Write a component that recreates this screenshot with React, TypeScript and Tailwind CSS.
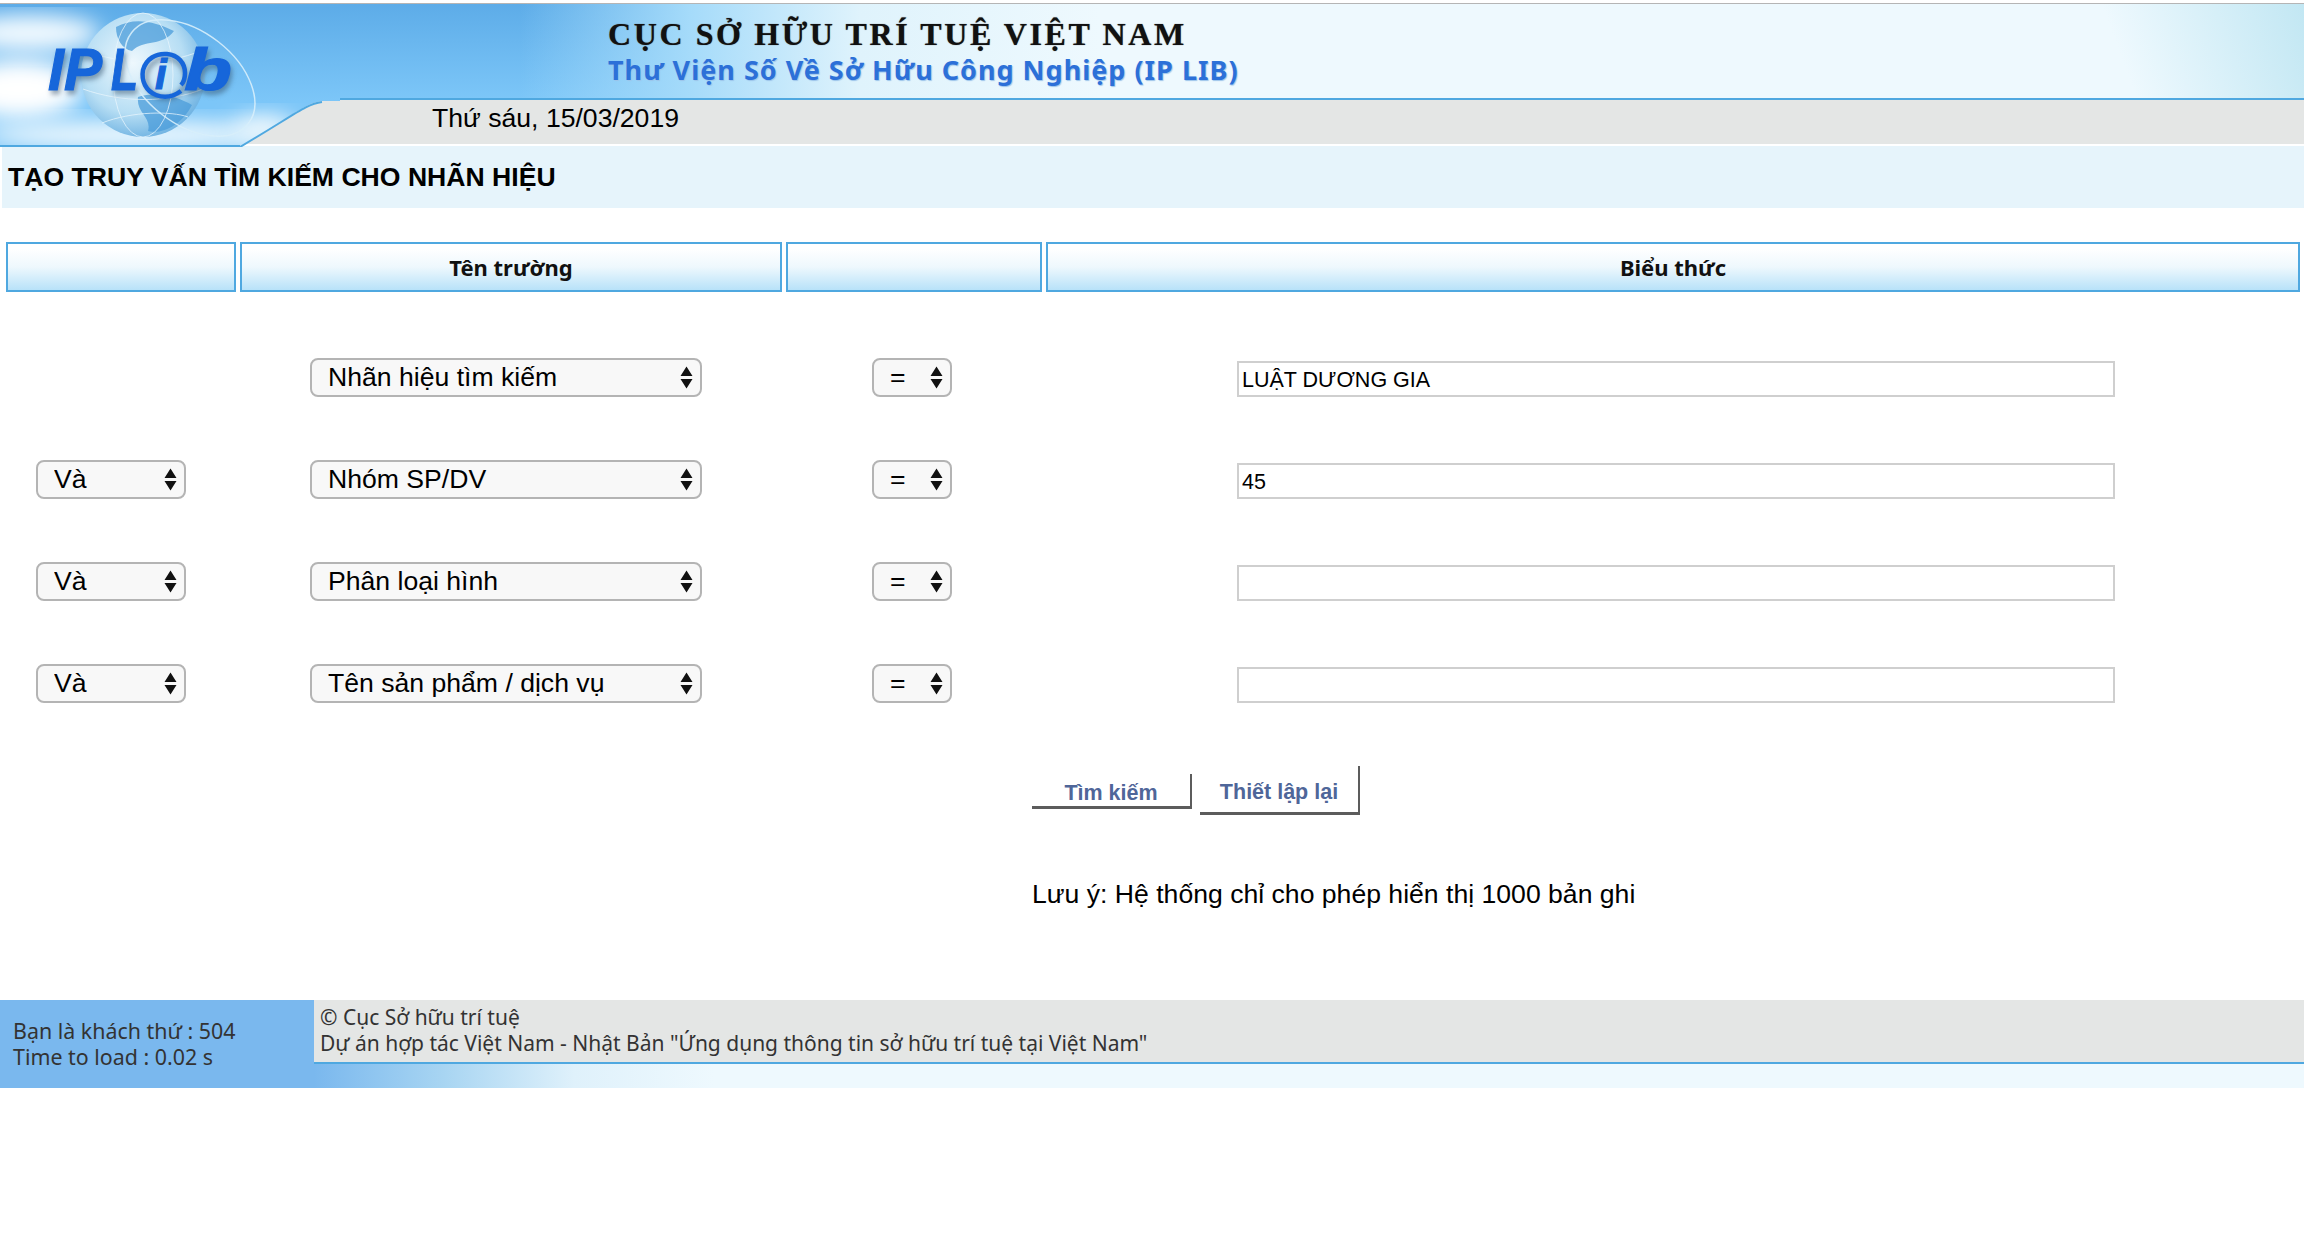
const ROWS = [
  { join: '', field: 'Nhãn hiệu tìm kiếm', value: 'LUẬT DƯƠNG GIA' },
  { join: 'Và', field: 'Nhóm SP/DV', value: '45' },
  { join: 'Và', field: 'Phân loại hình', value: '' },
  { join: 'Và', field: 'Tên sản phẩm / dịch vụ', value: '' },
];

const COLUMNS = 'grid grid-cols-[230px_542px_256px_1254px] gap-x-[4px] pl-[6px]';

function LogoText() {
  return (
    <>
      <text x="48" y="83" textLength="54" lengthAdjust="spacingAndGlyphs">IP</text>
      <text x="111" y="83" textLength="27" lengthAdjust="spacingAndGlyphs">L</text>
      <text x="184" y="83" textLength="48" lengthAdjust="spacingAndGlyphs">b</text>
    </>
  );
}

function Logo() {
  return (
    <svg className="absolute left-0 top-[4px]" width="340" height="140" viewBox="0 0 340 140">
      <defs>
        <linearGradient id="sky" gradientUnits="userSpaceOnUse" x1="0" y1="0" x2="0" y2="94">
          <stop offset="0" stopColor="#5dace8" />
          <stop offset="1" stopColor="#7cc6f8" />
        </linearGradient>
        <radialGradient id="globe" cx="0.42" cy="0.4" r="0.68">
          <stop offset="0" stopColor="#eef8fd" />
          <stop offset="0.6" stopColor="#b7def4" />
          <stop offset="1" stopColor="#5fa9de" />
        </radialGradient>
        <filter id="soft" x="-30%" y="-40%" width="160%" height="180%">
          <feGaussianBlur stdDeviation="11" />
        </filter>
        <filter id="shade" x="-10%" y="-10%" width="120%" height="130%">
          <feGaussianBlur stdDeviation="2.5" />
        </filter>
        <filter id="thin" x="-10%" y="-10%" width="120%" height="120%">
          <feGaussianBlur stdDeviation="0.7" />
        </filter>
        <clipPath id="skyClip">
          <path d="M0 0H340V94H322C306 96 296 106 240 140H0Z" />
        </clipPath>
      </defs>
      <g clipPath="url(#skyClip)">
        <rect width="340" height="140" fill="url(#sky)" />
        <ellipse cx="30" cy="26" rx="70" ry="18" fill="#f4fbff" filter="url(#soft)" />
        <ellipse cx="20" cy="82" rx="62" ry="30" fill="#fff" filter="url(#soft)" />
        <ellipse cx="130" cy="128" rx="150" ry="14" fill="#f2fafe" filter="url(#soft)" />
        <ellipse cx="265" cy="122" rx="32" ry="14" fill="#eef8fd" filter="url(#soft)" />
        <circle cx="143" cy="68" r="62" fill="url(#globe)" />
        <path d="M116 20C134 10 154 14 174 24C162 40 144 32 132 44C122 42 116 32 116 20ZM138 90C158 84 178 90 192 98C182 118 162 128 148 124C152 110 136 106 138 90Z" fill="#4b9ddb" opacity="0.75" filter="url(#thin)" />
        <g fill="none" stroke="#eaf6fd" strokeWidth="1" opacity="0.75">
          <ellipse cx="143" cy="68" rx="30" ry="62" />
          <path d="M86 44C122 58 168 58 200 44M83 82C122 96 168 96 203 82M102 116C132 104 172 104 188 110" />
        </g>
        <ellipse cx="190" cy="71" rx="74" ry="46" transform="rotate(38 190 71)" fill="none" stroke="#d7eefb" strokeWidth="1.5" opacity="0.9" />
        <path d="M0 139H240" stroke="#4fa8e0" strokeWidth="2" />
      </g>
      <path d="M322 95C306 97 296 107 240 140" fill="none" stroke="#4fa8e0" strokeWidth="2" />
      <g fontFamily="Liberation Sans, sans-serif" fontWeight="700" fontStyle="italic" fontSize="60">
        <g filter="url(#shade)" fill="#33506b" stroke="#33506b" opacity="0.5" transform="translate(2 4)">
          <LogoText />
          <circle cx="164" cy="67" r="20" fill="none" strokeWidth="5" />
        </g>
        <g fill="#1666da" stroke="#1666da" strokeWidth="1.2">
          <LogoText />
          <path d="M181 84C173 90 164 91 156 88C146 84 141 74 143 63C146 52 156 46 167 47C178 48 185 56 185 66C185 72 183 76 181 78" fill="none" strokeWidth="4.5" />
          <text x="155" y="82" fontSize="42">i</text>
        </g>
      </g>
    </svg>
  );
}

function Arrows() {
  return (
    <svg className="pointer-events-none absolute right-[9px] top-[8px]" width="13" height="23" viewBox="0 0 13 23">
      <path d="M6.500 0.500L12.500 10H0.500Z M6.500 22.500L0.500 13H12.500Z" fill="#111" />
    </svg>
  );
}

function FakeSelect({ value, className }: { value: string; className: string }) {
  return (
    <div className={`relative h-[39px] ${className}`}>
      <select
        defaultValue={value}
        className="h-full w-full appearance-none rounded-[8px] border-2 border-[#b4b4b4] bg-[#f8f8f8] pb-[1px] pl-[16px] text-[26.600px] leading-[32px] text-black outline-none"
      >
        <option>{value}</option>
      </select>
      <Arrows />
    </div>
  );
}

export default function App() {
  return (
    <div className="min-h-[1234px] bg-white pt-[3px] font-['Liberation_Sans',sans-serif] text-black">
      <div className="relative">
        <div className="border-t border-[#b5b5b5]" />
        <div className="flex h-[94px] bg-[linear-gradient(250deg,#c2e7f3_0px,#eef9fe_190px,transparent_190px),linear-gradient(90deg,transparent_520px,#a5dbfa_690px,#dff3fc_860px,#eef9fe_1100px),linear-gradient(180deg,#5dace8,#7cc6f8)] pl-[608px] pt-[13px]">
          <div>
            <p className="font-['Liberation_Serif',serif] text-[32px] font-bold leading-[35px] tracking-[2.600px] text-[#111] [text-shadow:0_0_1px_#555]">
              CỤC SỞ HỮU TRÍ TUỆ VIỆT NAM
            </p>
            <p className="font-['Noto_Sans',sans-serif] text-[27px] font-bold leading-[35px] tracking-[1px] text-[#2c70d8] [text-shadow:1px_1px_1px_#9cc4ea]">
              Thư Viện Số Về Sở Hữu Công Nghiệp (IP LIB)
            </p>
          </div>
        </div>
        <div className="h-[2px] bg-[#4fa8e0]" />
        <div className="h-[44px] bg-[#e4e6e5] pl-[432px] text-[26.600px] leading-[37px]">Thứ sáu, 15/03/2019</div>
        <Logo />
      </div>

      <h1 className="ml-[2px] mt-[2px] h-[62px] bg-[#e6f4fb] pl-[6px] text-[26.600px] font-bold leading-[62px]">
        TẠO TRUY VẤN TÌM KIẾM CHO NHÃN HIỆU
      </h1>

      <div className={`${COLUMNS} mt-[34px]`}>
        {['', 'Tên trường', '', 'Biểu thức'].map((label, i) => (
          <div
            key={i}
            className="flex h-[50px] items-center justify-center border-2 border-[#4fa8e0] bg-[linear-gradient(180deg,#ffffff_10%,#eef8fd_50%,#b8e2f9_100%)] font-['Noto_Sans',sans-serif] text-[22px] font-bold text-[#111]"
          >
            {label}
          </div>
        ))}
      </div>

      <div className="mt-[66px] flex flex-col gap-y-[63px]">
        {ROWS.map((row) => (
          <div key={row.field} className={`${COLUMNS} items-start`}>
            <div>{row.join && <FakeSelect value={row.join} className="ml-[30px] w-[150px]" />}</div>
            <FakeSelect value={row.field} className="ml-[70px] w-[392px]" />
            <FakeSelect value="=" className="ml-[86px] w-[80px]" />
            <input
              readOnly
              value={row.value}
              className="ml-[191px] mt-[3px] h-[36px] w-[878px] border-2 border-[#cfcfcf] bg-white px-[3px] pt-[3px] text-[21.500px] text-black outline-none"
            />
          </div>
        ))}
      </div>

      <div className="ml-[1032px] mt-[63px] flex items-start gap-x-[8px] font-bold text-[#4f6699]">
        <button className="mt-[8px] h-[35px] w-[160px] border-b-[3px] border-r-[2px] border-[#5c5c5c] pt-[3px] text-[21.500px]">
          Tìm kiếm
        </button>
        <button className="h-[49px] w-[160px] border-b-[3px] border-r-[2px] border-[#5c5c5c] pt-[7px] text-[21.500px]">
          Thiết lập lại
        </button>
      </div>

      <p className="ml-[1032px] mt-[64px] text-[26.600px] leading-[30px]">
        Lưu ý: Hệ thống chỉ cho phép hiển thị 1000 bản ghi
      </p>

      <footer className="mt-[91px] flex h-[88px] font-['Noto_Sans',sans-serif] text-[21px] leading-[26px] text-[#333]">
        <div className="w-[314px] bg-[#7ab8ee] pl-[13px] pt-[18px] text-[21.400px]">
          <p>Bạn là khách thứ : 504</p>
          <p>Time to load : 0.02 s</p>
        </div>
        <div className="flex flex-1 flex-col">
          <div className="h-[62px] bg-[#e4e6e5] pl-[6px] pt-[4px]">
            <p>© Cục Sở hữu trí tuệ</p>
            <p>Dự án hợp tác Việt Nam - Nhật Bản "Ứng dụng thông tin sở hữu trí tuệ tại Việt Nam"</p>
          </div>
          <div className="h-[2px] bg-[#4fa8e0]" />
          <div className="flex-1 bg-[linear-gradient(90deg,#7ab8ee_0px,#a8d5f2_130px,#dff1fb_260px,#eef9fe_400px)]" />
        </div>
      </footer>
    </div>
  );
}
